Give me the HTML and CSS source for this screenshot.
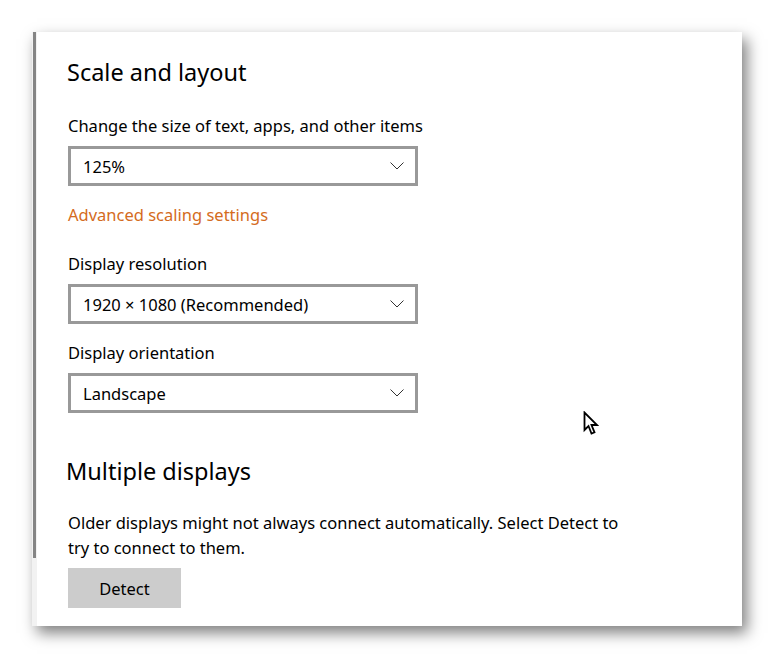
FILE: index.html
```html
<!DOCTYPE html>
<html lang="en">
<head>
    <meta charset="UTF-8">
    <meta name="viewport" content="width=device-width, initial-scale=1.0">
    <title>Display settings</title>
    <link rel="stylesheet" href="styles.css">
</head>
<body>
    <div class="panel">
        <div class="scroll-track">
            <div class="scroll-thumb"></div>
        </div>

        <div class="content">
            <h2 class="section-title">Scale and layout</h2>

            <p class="label">Change the size of text, apps, and other items</p>
            <div class="dropdown">
                <span>125%</span>
                <svg class="chevron" width="14" height="8" viewBox="0 0 14 8"><polyline points="0.5,0.5 7,7 13.5,0.5" fill="none" stroke="#333" stroke-width="1"/></svg>
            </div>

            <a class="link" href="#">Advanced scaling settings</a>

            <p class="label spaced">Display resolution</p>
            <div class="dropdown">
                <span>1920 × 1080 (Recommended)</span>
                <svg class="chevron" width="14" height="8" viewBox="0 0 14 8"><polyline points="0.5,0.5 7,7 13.5,0.5" fill="none" stroke="#333" stroke-width="1"/></svg>
            </div>

            <p class="label after-dropdown">Display orientation</p>
            <div class="dropdown">
                <span>Landscape</span>
                <svg class="chevron" width="14" height="8" viewBox="0 0 14 8"><polyline points="0.5,0.5 7,7 13.5,0.5" fill="none" stroke="#333" stroke-width="1"/></svg>
            </div>

            <h2 class="section-title second">Multiple displays</h2>

            <p class="desc">Older displays might not always connect automatically. Select Detect to try to connect to them.</p>

            <button class="detect-btn">Detect</button>
        </div>

        <!-- mouse pointer sitting over the page -->
        <svg class="pointer" width="16" height="26" viewBox="0 0 16 26">
            <path d="M1.5,1.5 L1.5,19 L5.5,15 L8.5,22.5 L11.5,21.3 L8.5,14 L14,14 Z" fill="#fff" stroke="#000" stroke-width="1.8" stroke-linejoin="miter"/>
        </svg>
    </div>
</body>
</html>
```

FILE: styles.css
```css
html, body {
    height: 100%;
}

body {
    margin: 0;
    padding-top: 32px;
    box-sizing: border-box;
    background-color: #ffffff;
    font-family: "Noto Sans", "Open Sans", sans-serif;
    color: #000;
}

.panel {
    position: relative;
    display: flex;
    width: 710px;
    height: 594px;
    margin-left: 32px;
    background-color: #fff;
    box-shadow: 5px 7px 14px rgba(0, 0, 0, 0.5);
}

.scroll-track {
    width: 5px;
    flex-shrink: 0;
    background-color: #f2f2f2;
}

.scroll-thumb {
    width: 3px;
    height: 526px;
    margin-left: 1px;
    background-color: #858585;
}

.content {
    padding: 22px 0 0 30px;
    flex: 1;
    overflow: hidden;
}

.section-title {
    margin: 0;
    font-size: 23.5px;
    font-weight: 400;
    line-height: 36px;
}

.section-title.second {
    margin-top: 40px;
    margin-left: -1px;
}

.label {
    margin: 24px 0 0 1px;
    font-size: 16.5px;
    line-height: 24px;
}

.label.spaced {
    margin-top: 25px;
}

.label.after-dropdown {
    margin-top: 17px;
}

.dropdown {
    box-sizing: border-box;
    display: flex;
    align-items: center;
    justify-content: space-between;
    width: 350px;
    height: 40px;
    margin: 8px 0 0 1px;
    padding: 0 11px 0 12px;
    border: 3px solid #999999;
    font-size: 16.5px;
}

.link {
    display: block;
    margin: 17px 0 0 1px;
    font-size: 16.5px;
    line-height: 24px;
    color: #d46b21;
    text-decoration: none;
}

.desc {
    width: 556px;
    margin: 21px 0 0 1px;
    font-size: 16.5px;
    line-height: 25px;
}

.detect-btn {
    display: block;
    width: 113px;
    height: 40px;
    margin: 8px 0 0 1px;
    border: none;
    background-color: #cccccc;
    font-family: inherit;
    font-size: 16.5px;
    color: #000;
}

.pointer {
    position: absolute;
    left: 551px;
    top: 379px;
}
```
